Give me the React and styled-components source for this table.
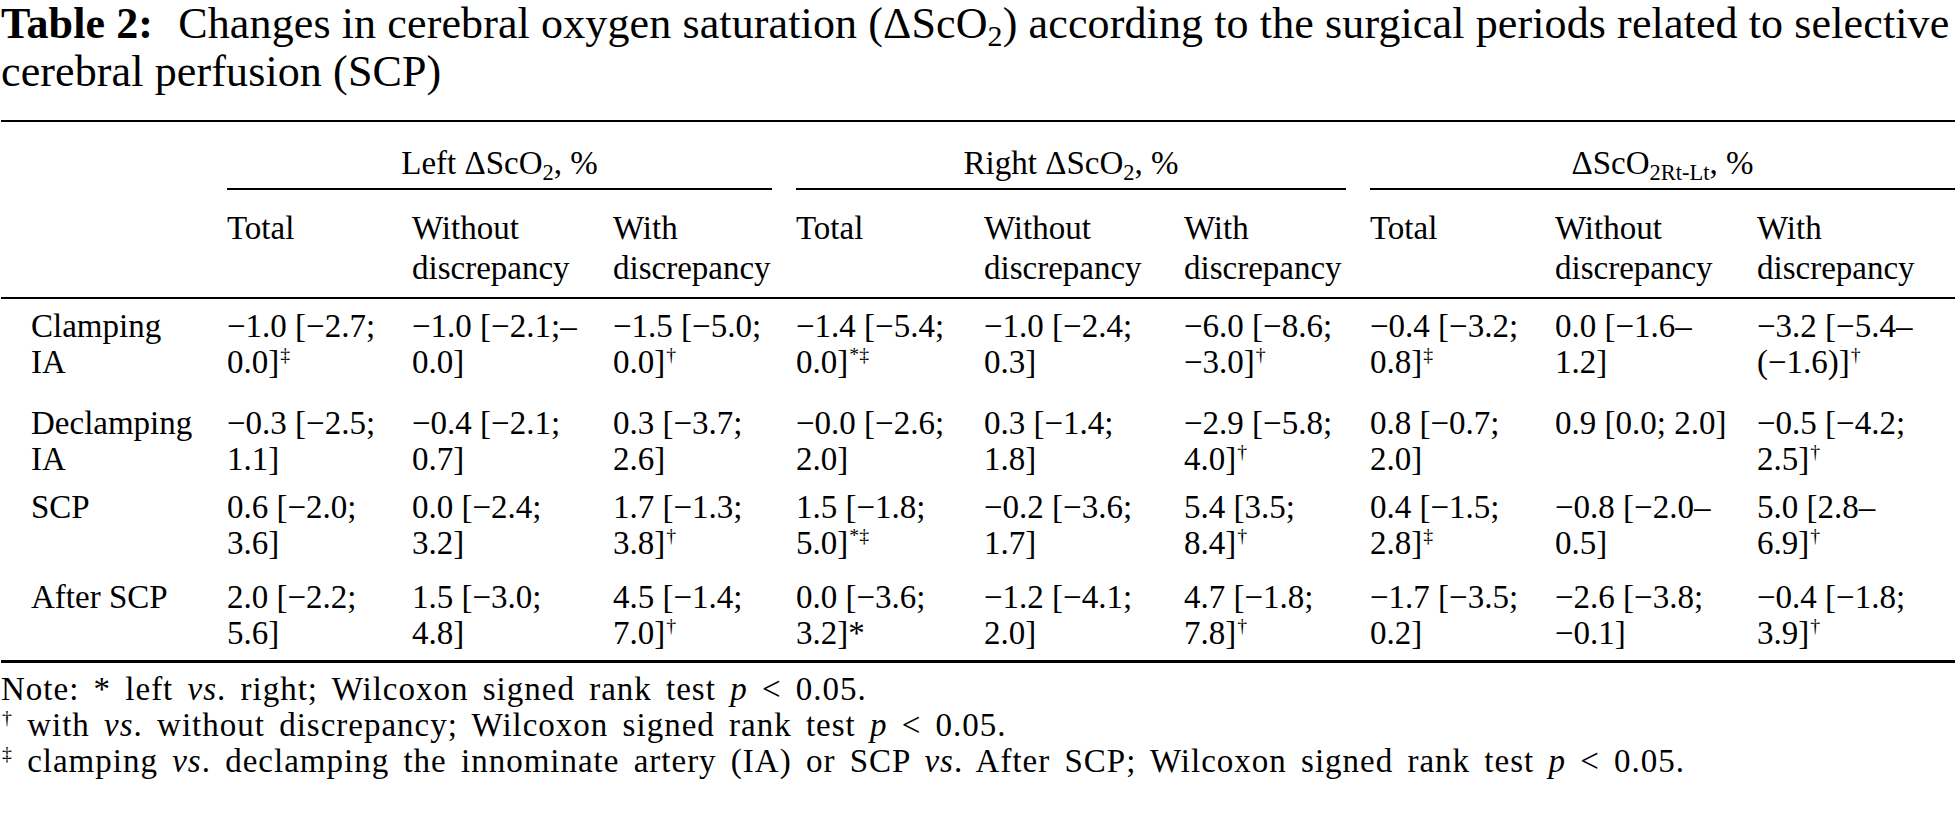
import React from "react";
import styled, { createGlobalStyle } from "styled-components";

const Global = createGlobalStyle`
  html, body { margin: 0; padding: 0; background: #fff; }
  body { font-family: "Liberation Serif", "Times New Roman", serif; color: #000; }
`;

const Page = styled.div`
  width: 1957px;
  padding: 0 2px 0 1px;
  box-sizing: border-box;
`;

const Title = styled.h1`
  margin: 0;
  font-size: 44px;
  line-height: 48px;
  font-weight: 400;
  letter-spacing: 0.12px;
  white-space: nowrap;
`;

const TitleLabel = styled.b`
  font-weight: 700;
  margin-right: 14px;
`;

const Sub = styled.sub`
  font-size: 0.68em;
  vertical-align: -0.28em;
  line-height: 0;
`;

const Sup = styled.sup`
  font-size: 0.6em;
  vertical-align: 0.62em;
  line-height: 0;
  margin-left: 1px;
`;

const Table = styled.div`
  margin-top: 24px;
  display: grid;
  grid-template-columns: 226px 185px 201px 183px 188px 200px 186px 185px 202px 1fr;
  font-size: 33px;
`;

const Rule = styled.div`
  grid-column: 1 / -1;
  height: ${(p) => p.$thick || 2}px;
  background: #000;
`;

const Blank = styled.div``;

const GroupHead = styled.div`
  grid-column: span 3;
  margin-right: ${(p) => (p.$last ? 0 : 24)}px;
  padding: 22px 0 6px;
  line-height: 38px;
  text-align: center;
  border-bottom: 2px solid #000;
`;

const ColHead = styled.div`
  padding: 18px 0 9px;
  line-height: 40px;
`;

const LabelCell = styled.div`
  padding: ${(p) => p.$pt}px 0 ${(p) => p.$pb}px 30px;
  line-height: 36px;
`;

const DataCell = styled.div`
  padding: ${(p) => p.$pt}px 0 ${(p) => p.$pb}px;
  line-height: 36px;
  white-space: nowrap;
`;

const Line = styled.span`
  display: block;
`;

const Notes = styled.div`
  margin-top: 8px;
  font-size: 33px;
  letter-spacing: 1px;
  word-spacing: 5px;
  line-height: 36px;
`;

const NoteLine = styled.p`
  margin: 0;
  white-space: nowrap;
`;

const Ital = styled.i`
  font-style: italic;
`;

const Dsco = ({ sub = "2" }) => (
  <>
    ΔScO<Sub>{sub}</Sub>
  </>
);

const groups = [
  { key: "l", label: <>Left <Dsco />, %</> },
  { key: "r", label: <>Right <Dsco />, %</> },
  { key: "d", label: <><Dsco sub="2Rt-Lt" />, %</>, last: true },
];

const colHeads = [["Total"], ["Without", "discrepancy"], ["With", "discrepancy"]];

const rows = [
  {
    label: ["Clamping", "IA"],
    pt: 9,
    pb: 9,
    cells: [
      ["−1.0 [−2.7;", "0.0]", "‡"],
      ["−1.0 [−2.1;–", "0.0]"],
      ["−1.5 [−5.0;", "0.0]", "†"],
      ["−1.4 [−5.4;", "0.0]", "*‡"],
      ["−1.0 [−2.4;", "0.3]"],
      ["−6.0 [−8.6;", "−3.0]", "†"],
      ["−0.4 [−3.2;", "0.8]", "‡"],
      ["0.0 [−1.6–", "1.2]"],
      ["−3.2 [−5.4–", "(−1.6)]", "†"],
    ],
  },
  {
    label: ["Declamping", "IA"],
    pt: 16,
    pb: 3,
    cells: [
      ["−0.3 [−2.5;", "1.1]"],
      ["−0.4 [−2.1;", "0.7]"],
      ["0.3 [−3.7;", "2.6]"],
      ["−0.0 [−2.6;", "2.0]"],
      ["0.3 [−1.4;", "1.8]"],
      ["−2.9 [−5.8;", "4.0]", "†"],
      ["0.8 [−0.7;", "2.0]"],
      ["0.9 [0.0; 2.0]"],
      ["−0.5 [−4.2;", "2.5]", "†"],
    ],
  },
  {
    label: ["SCP"],
    pt: 9,
    pb: 9,
    cells: [
      ["0.6 [−2.0;", "3.6]"],
      ["0.0 [−2.4;", "3.2]"],
      ["1.7 [−1.3;", "3.8]", "†"],
      ["1.5 [−1.8;", "5.0]", "*‡"],
      ["−0.2 [−3.6;", "1.7]"],
      ["5.4 [3.5;", "8.4]", "†"],
      ["0.4 [−1.5;", "2.8]", "‡"],
      ["−0.8 [−2.0–", "0.5]"],
      ["5.0 [2.8–", "6.9]", "†"],
    ],
  },
  {
    label: ["After SCP"],
    pt: 9,
    pb: 9,
    cells: [
      ["2.0 [−2.2;", "5.6]"],
      ["1.5 [−3.0;", "4.8]"],
      ["4.5 [−1.4;", "7.0]", "†"],
      ["0.0 [−3.6;", "3.2]*"],
      ["−1.2 [−4.1;", "2.0]"],
      ["4.7 [−1.8;", "7.8]", "†"],
      ["−1.7 [−3.5;", "0.2]"],
      ["−2.6 [−3.8;", "−0.1]"],
      ["−0.4 [−1.8;", "3.9]", "†"],
    ],
  },
];

export default function App() {
  return (
    <Page>
      <Global />
      <Title>
        <TitleLabel>Table 2:</TitleLabel> Changes in cerebral oxygen saturation (<Dsco />) according to the surgical periods related to selective
        <br />
        cerebral perfusion (SCP)
      </Title>

      <Table>
        <Rule />
        <Blank />
        {groups.map((g) => (
          <GroupHead key={g.key} $last={g.last}>
            {g.label}
          </GroupHead>
        ))}
        <Blank />
        {groups.map((g) =>
          colHeads.map((h, i) => (
            <ColHead key={g.key + i}>
              {h.map((t) => (
                <Line key={t}>{t}</Line>
              ))}
            </ColHead>
          ))
        )}
        <Rule />
        {rows.map((r) => (
          <React.Fragment key={r.label.join(" ")}>
            <LabelCell $pt={r.pt} $pb={r.pb}>
              {r.label.map((t) => (
                <Line key={t}>{t}</Line>
              ))}
            </LabelCell>
            {r.cells.map(([a, b, s], i) => (
              <DataCell key={i} $pt={r.pt} $pb={r.pb}>
                <Line>{a}</Line>
                {b && (
                  <Line>
                    {b}
                    {s && <Sup>{s}</Sup>}
                  </Line>
                )}
              </DataCell>
            ))}
          </React.Fragment>
        ))}
        <Rule $thick={3} />
      </Table>

      <Notes>
        <NoteLine>
          Note: * left <Ital>vs</Ital>. right; Wilcoxon signed rank test <Ital>p</Ital> &lt; 0.05.
        </NoteLine>
        <NoteLine>
          <Sup>†</Sup> with <Ital>vs</Ital>. without discrepancy; Wilcoxon signed rank test <Ital>p</Ital> &lt; 0.05.
        </NoteLine>
        <NoteLine>
          <Sup>‡</Sup> clamping <Ital>vs</Ital>. declamping the innominate artery (IA) or SCP <Ital>vs</Ital>. After SCP; Wilcoxon signed rank test <Ital>p</Ital> &lt; 0.05.
        </NoteLine>
      </Notes>
    </Page>
  );
}
